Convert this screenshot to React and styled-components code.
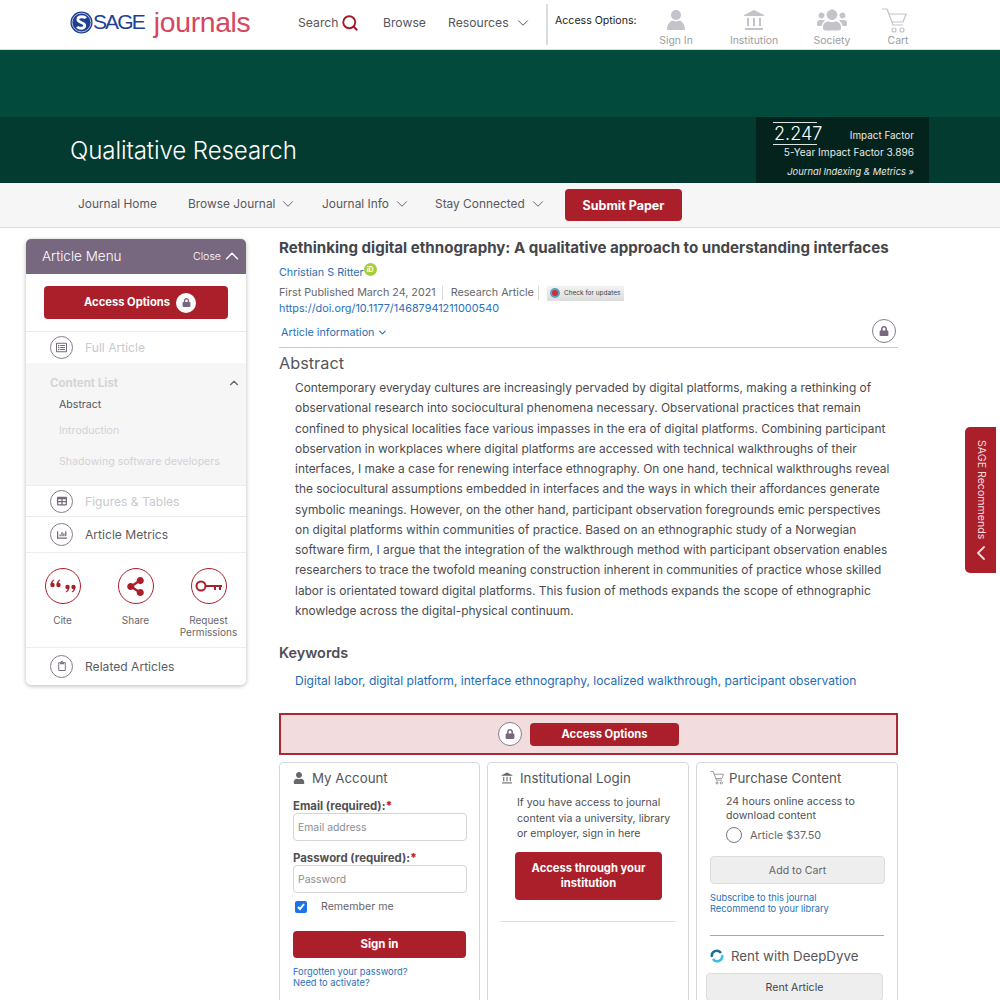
import styled, { createGlobalStyle } from "styled-components";
import { ChevronDown, ChevronUp, ChevronLeft, Search } from "lucide-react";
import { FaLock, FaUser, FaUsers, FaShareAlt, FaRegListAlt, FaTable, FaChartBar, FaRegClipboard } from "react-icons/fa";

const GlobalStyle = createGlobalStyle`
  html, body {
    margin: 0;
    padding: 0;
    background: #fff;
    font-family: Inter, "Liberation Sans", sans-serif;
    color: #4a4a4f;
  }
  * { box-sizing: border-box; }
`;

const Page = styled.div`
  position: relative;
  width: 1000px;
  height: 1000px;
  overflow: hidden;
`;

/* top header */
const Header = styled.header`
  height: 50px;
  display: flex;
  align-items: center;
  padding-left: 70px;
  border-bottom: 1px solid #d9d9d9;
`;

const Logo = styled.div`
  width: 228px;
  display: flex;
  align-items: center;
  height: 50px;
  padding-bottom: 5px;
`;

const LogoSage = styled.span`
  font-family: "Liberation Sans", Arial, sans-serif;
  font-size: 21px;
  letter-spacing: -1.9px;
  color: #1f3f94;
`;

const LogoJournals = styled.span`
  font-family: "Liberation Sans", Arial, sans-serif;
  font-size: 28.3px;
  letter-spacing: -0.3px;
  color: #d8455c;
  margin-left: 10px;
`;

const TopLink = styled.a`
  display: flex;
  align-items: center;
  gap: ${(p) => p.$gap || 3}px;
  width: ${(p) => p.$w}px;
  font-size: 12.2px;
  color: #55555a;
  padding-bottom: 4px;
`;

const Divider = styled.div`
  width: 2px;
  height: 41px;
  margin-left: -2px;
  background: #dcdcdc;
  align-self: flex-start;
  margin-top: 4px;
`;

const AccessLabel = styled.div`
  font-size: 10.6px;
  color: #222;
  width: 91px;
  padding-left: 7px;
  align-self: flex-start;
  margin-top: 14px;
`;

const AccessItem = styled.div`
  width: ${(p) => p.$w}px;
  display: flex;
  flex-direction: column;
  align-items: center;
  justify-content: flex-end;
  height: 47px;
  color: #c4c2cb;
  align-self: flex-start;
  span {
    margin-top: 3px;
    font-size: 10.4px;
    line-height: 13px;
    color: #9b9ba1;
  }
`;

const SocietyIcon = styled(FaUsers)`
  margin-bottom: -4px;
`;

const CartIconBox = styled.div`
  margin: 0 8px -3px 0;
  height: 26px;
`;

const Banner = styled.div`
  height: 133px;
  background: #024a3b;
  display: flex;
  flex-direction: column;
  justify-content: flex-end;
`;

const BannerInner = styled.div`
  height: 66px;
  background: #033b30;
  padding-left: 70px;
  display: flex;
  align-items: center;
  justify-content: space-between;
`;

const JournalTitle = styled.div`
  font-size: 24.1px;
  font-weight: 300;
  color: #fff;
  letter-spacing: -0.1px;
`;

const Metrics = styled.div`
  width: 173px;
  height: 66px;
  margin-right: 71px;
  background: #05231d;
  color: #e6e9e8;
  padding: 5px 15px 0 17px;
  display: flex;
  flex-direction: column;
  font-size: 9.9px;
`;

const FactorRow = styled.div`
  display: flex;
  align-items: center;
  justify-content: space-between;
  height: 23px;
  margin-bottom: 1px;
  span { margin-top: 3px; }
`;

const FactorNum = styled.div`
  font-size: 18px;
  font-weight: 300;
  line-height: 21px;
  color: #fff;
  border-top: 1px solid #dfe5e3;
  border-bottom: 1px solid #dfe5e3;
  padding: 0 1px;
  width: 44px;
`;

const MetricsLine = styled.div`
  text-align: right;
  height: 19px;
  line-height: 14px;
  font-style: ${(p) => (p.$italic ? "italic" : "normal")};
  font-size: ${(p) => (p.$italic ? "9.35px" : "10.1px")};
  margin-top: ${(p) => (p.$italic ? "1px" : "-1px")};
`;

const NavBar = styled.nav`
  height: 45px;
  background: #f6f6f7;
  border-bottom: 1px solid #dcdcdc;
  display: flex;
  align-items: center;
  padding-left: 78px;
  font-size: 11.9px;
  color: #59595e;
`;

const NavItem = styled.div`
  display: flex;
  align-items: center;
  gap: 4px;
  width: ${(p) => p.$w}px;
  padding-bottom: 3px;
`;

const RedButton = styled.button`
  border: none;
  background: #ab1f2a;
  color: #fff;
  font-family: inherit;
  font-weight: 700;
  border-radius: 4px;
  padding: 0 0 0 ${(p) => p.$pl || 0}px;
  display: flex;
  align-items: center;
  justify-content: center;
  text-align: center;
  gap: ${(p) => p.$gap || 0}px;
  font-size: ${(p) => p.$size || 11.2}px;
  width: ${(p) => p.$w}px;
  height: ${(p) => p.$h}px;
  line-height: 15px;
`;

const SignInButton = styled(RedButton)`
  margin-top: 18px;
`;

const InstitutionButton = styled(RedButton)`
  margin: 10px 0 0 14px;
`;

/* body */
const Content = styled.div`
  display: flex;
  padding: 11px 0 0 26px;
  gap: 33px;
`;

const Sidebar = styled.aside`
  width: 220px;
  height: 446px;
  flex-shrink: 0;
  border-radius: 5px;
  background: #fff;
  box-shadow: 0 1px 4px rgba(0, 0, 0, 0.28);
  overflow: hidden;
`;

const SideHead = styled.div`
  height: 35px;
  background: #776880;
  color: #fff;
  display: flex;
  align-items: center;
  justify-content: space-between;
  padding: 0 3px 1px 16px;
  font-size: 13.5px;
  font-weight: 300;
`;

const CloseBtn = styled.div`
  display: flex;
  align-items: center;
  font-size: 10.6px;
`;

const SideAccess = styled.div`
  height: 58px;
  padding: 12px 18px 0 18px;
  border-bottom: 1px solid #ececee;
`;

const WhiteLock = styled.span`
  width: 20px;
  height: 20px;
  border-radius: 50%;
  background: #fff;
  color: #776880;
  display: flex;
  align-items: center;
  justify-content: center;
`;

const MenuRow = styled.div`
  height: ${(p) => p.$h}px;
  display: flex;
  align-items: center;
  padding-left: 24px;
  gap: 12px;
  font-size: 12.1px;
  color: ${(p) => (p.$off ? "#c9c9ce" : "#5c5c61")};
  border-bottom: ${(p) => (p.$line ? "1px solid #ececee" : "none")};
`;

const RoundIcon = styled.span`
  width: ${(p) => p.$s || 23}px;
  height: ${(p) => p.$s || 23}px;
  margin-top: ${(p) => p.$mt || 0}px;
  border-radius: 50%;
  border: 1px solid #867b8e;
  background: #fff;
  color: #776880;
  display: flex;
  align-items: center;
  justify-content: center;
  flex-shrink: 0;
`;

const ContentList = styled.div`
  height: 123px;
  background: #f6f6f7;
  padding: 13px 5px 0 24px;
  border-bottom: 1px solid #ececee;
`;

const ContentHead = styled.div`
  display: flex;
  justify-content: space-between;
  align-items: center;
  font-size: 11.5px;
  font-weight: 700;
  color: #d4d4d8;
`;

const ContentLink = styled.div`
  font-size: 10.6px;
  margin-left: 9px;
  margin-top: ${(p) => p.$top}px;
  color: ${(p) => (p.$off ? "#d2d2d6" : "#55555a")};
`;

const Tools = styled.div`
  height: 95px;
  padding-top: 15px;
  display: grid;
  grid-template-columns: 73px 73px 73px;
  border-bottom: 1px solid #ececee;
`;

const Tool = styled.div`
  display: flex;
  flex-direction: column;
  align-items: center;
  text-align: center;
  font-size: 10px;
  line-height: 12px;
  color: #66666b;
`;

const ToolIcon = styled.span`
  width: 36px;
  height: 36px;
  border-radius: 50%;
  border: 1.5px solid #ab1f2a;
  color: #ab1f2a;
  display: flex;
  align-items: center;
  justify-content: center;
  margin-bottom: 10px;
`;

const Main = styled.main`
  width: 619px;
`;

const Title = styled.h1`
  margin: 0;
  font-size: 15.1px;
  line-height: 18px;
  font-weight: 700;
  color: #45454a;
  white-space: nowrap;
`;

const Author = styled.div`
  margin-top: 8px;
  display: flex;
  align-items: flex-start;
  font-size: 10.75px;
  line-height: 16px;
  color: #2a70b8;
`;

const OrcidBadge = styled.span`
  width: 13px;
  height: 13px;
  border-radius: 50%;
  background: #a6ce39;
  color: #fff;
  font-size: 7px;
  font-weight: 700;
  line-height: 13px;
  text-align: center;
  margin-top: -2px;
`;

const MetaRow = styled.div`
  margin-top: 4px;
  display: flex;
  align-items: center;
  font-size: 10.75px;
  line-height: 16px;
  color: #66666b;
`;

const MetaSep = styled.span`
  width: 1px;
  height: 14px;
  background: #d9d9dc;
  margin: 0 ${(p) => p.$r || 8}px 0 ${(p) => p.$l || 6}px;
`;

const CheckBadge = styled.span`
  height: 15px;
  width: 77px;
  background: linear-gradient(#f2f2f2, #dcdcdc);
  display: flex;
  align-items: center;
  gap: 4px;
  padding-left: 3px;
  font-size: 6.5px;
  color: #444;
  white-space: nowrap;
`;

const BadgeDot = styled.span`
  width: 10px;
  height: 10px;
  border-radius: 50%;
  background: #c9332f;
  border: 2px solid #5ea1c7;
`;

const Doi = styled.a`
  display: block;
  font-size: 10.85px;
  line-height: 15px;
  color: #2a70b8;
`;

const InfoRow = styled.div`
  height: 32px;
  padding: 0 2px;
  display: flex;
  align-items: center;
  justify-content: space-between;
  border-bottom: 1px solid #c9c9cc;
  font-size: 10.75px;
  color: #2a70b8;
`;

const InfoLink = styled.span`
  display: flex;
  align-items: center;
  gap: 3px;
  margin-top: 2px;
`;

const H2 = styled.h2`
  margin: 5px 0 0;
  font-size: 16.3px;
  line-height: 20px;
  font-weight: 400;
  color: #55555a;
`;

const Abstract = styled.p`
  margin: 5px 0 0;
  padding-left: 16px;
  width: 612px;
  font-size: 11.9px;
  line-height: 20.27px;
  color: #4b4b50;
`;

const KeywordsHead = styled.h3`
  margin: 23px 0 0;
  font-size: 14.4px;
  line-height: 18px;
  font-weight: 600;
  color: #4f4f54;
`;

const Keywords = styled.div`
  margin-top: 10px;
  padding-left: 16px;
  font-size: 12.05px;
  line-height: 18px;
  color: #1e6bb8;
  span { color: #55555a; }
`;

const AccessBar = styled.div`
  margin-top: 23px;
  height: 42px;
  background: #f3dcde;
  border: 2px solid #a92a33;
  display: flex;
  align-items: center;
  justify-content: center;
  gap: 8px;
`;

const Cards = styled.div`
  margin-top: 7px;
  display: grid;
  grid-template-columns: 201px 202px 202px;
  gap: 7px;
`;

const Card = styled.section`
  height: 260px;
  border: 1px solid #d8d8dc;
  border-radius: 4px;
  padding: 6px 13px 0;
`;

const CardTitle = styled.div`
  display: flex;
  align-items: center;
  gap: ${(p) => p.$gap || 7}px;
  height: 18px;
  margin-top: ${(p) => p.$top || 0}px;
  font-size: 13.3px;
  color: #55555a;
  svg { color: #66666b; flex-shrink: 0; }
`;

const FieldLabel = styled.div`
  margin-top: ${(p) => p.$top}px;
  font-size: 11.4px;
  line-height: 14px;
  font-weight: 700;
  color: #505055;
  b { color: #c4232d; }
`;

const TextBox = styled.div`
  height: 28px;
  width: 174px;
  border: 1px solid #d5d5d8;
  border-radius: 4px;
  display: flex;
  align-items: center;
  padding-left: 4px;
  font-size: 10.4px;
  color: #8c8c91;
`;

const Remember = styled.div`
  display: flex;
  align-items: center;
  gap: 14px;
  margin-top: 7px;
  padding-left: 2px;
  font-size: 10.6px;
  color: #66666b;
`;

const Check = styled.span`
  width: 12px;
  height: 12px;
  border-radius: 2px;
  background: #1a73e8;
  display: flex;
  align-items: center;
  justify-content: center;
`;

const SmallLinks = styled.div`
  font-size: 9.3px;
  line-height: 11px;
  color: #2a70b8;
  margin-top: ${(p) => p.$top}px;
`;

const CardText = styled.div`
  margin: ${(p) => p.$top || 6}px 0 0 16px;
  font-size: 10.6px;
  line-height: ${(p) => p.$lh || 15.5}px;
  color: #505055;
`;

const Rule = styled.div`
  height: ${(p) => p.$h || 1}px;
  background: ${(p) => p.$c || "#dcdcdf"};
  margin-top: ${(p) => p.$top}px;
`;

const RadioRow = styled.div`
  display: flex;
  align-items: center;
  gap: 8px;
  margin: 4px 0 0 16px;
  font-size: 10.9px;
  color: #66666b;
`;

const Radio = styled.span`
  width: 16px;
  height: 16px;
  border-radius: 50%;
  border: 1px solid #77777c;
`;

const GreyButton = styled.div`
  width: ${(p) => p.$w}px;
  height: 28px;
  margin: ${(p) => p.$top}px 0 0 ${(p) => p.$left || 0}px;
  background: #eeeeee;
  border: 1px solid #dcdcdc;
  border-radius: 4px;
  display: flex;
  align-items: center;
  justify-content: center;
  font-size: 10.6px;
  color: ${(p) => p.$c || "#66666b"};
`;

const SideTab = styled.div`
  position: absolute;
  right: 4px;
  top: 427px;
  width: 31px;
  height: 146px;
  background: #ab1f2a;
  border-radius: 5px 0 0 5px;
  color: #f2d9db;
  display: flex;
  flex-direction: column;
  align-items: center;
  padding-top: 13px;
  font-size: 10.6px;
  span {
    writing-mode: vertical-rl;
    line-height: 14px;
  }
  svg { margin-top: 2px; }
`;

const UserGlyph = ({ size = 22, color = "currentColor" }) => (
  <svg width={size} height={size} viewBox="0 0 22 22" fill={color}>
    <circle cx="11" cy="6" r="5" />
    <path d="M2 21c0-6 3-9 6-9.5 2 1.4 4 1.4 6 0 3 .5 6 3.5 6 9.5z" />
  </svg>
);

const BankGlyph = ({ size = 22 }) => (
  <svg width={size} height={size} viewBox="0 0 22 22" fill="currentColor">
    <path d="M11 1 21 6v1H1V6z" />
    <rect x="4" y="9" width="2" height="8" />
    <rect x="10" y="9" width="2" height="8" />
    <rect x="16" y="9" width="2" height="8" />
    <rect x="2" y="19" width="18" height="2" />
  </svg>
);

const CartGlyph = ({ size = 26 }) => (
  <svg width={size} height={size} viewBox="0 0 26 26" fill="none" stroke="currentColor" strokeWidth="1.2">
    <path d="M1 1h5l6 16h10" />
    <path d="M8 6h17l-3 8H11" />
    <circle cx="13" cy="22" r="2" />
    <circle cx="21" cy="22" r="2" />
  </svg>
);

const KeyGlyph = () => (
  <svg width="28" height="14" viewBox="0 0 28 14" fill="none" stroke="currentColor" strokeWidth="2">
    <circle cx="6" cy="7" r="4.5" />
    <path d="M11 7h16M20 7v4M25 7v4" />
  </svg>
);

const QuotesGlyph = () => (
  <svg width="26" height="14" viewBox="0 0 26 14" fill="currentColor">
    <circle cx="2.500" cy="6" r="2.200" />
    <path d="M.6 5.400C.8 2.800 2 1.200 4 .6l.3.8C3 2 2.400 3.200 2.400 5z" />
    <circle cx="8.500" cy="6" r="2.200" />
    <path d="M6.600 5.400C6.800 2.800 8 1.200 10 .6l.3.8C9 2 8.400 3.200 8.400 5z" />
    <circle cx="17.500" cy="8" r="2.200" />
    <path d="M19.400 8.600c-.2 2.600-1.400 4.200-3.400 4.800l-.3-.8c1.300-.6 1.900-1.800 1.900-3.600z" />
    <circle cx="23.500" cy="8" r="2.200" />
    <path d="M25.400 8.600c-.2 2.600-1.400 4.200-3.400 4.800l-.3-.8c1.300-.6 1.900-1.800 1.900-3.600z" />
  </svg>
);

const SageMark = () => (
  <svg width="23" height="23" viewBox="0 0 25 25">
    <circle cx="12.5" cy="12.5" r="12" fill="#1f3f94" />
    <circle cx="12.5" cy="12.5" r="10.2" fill="none" stroke="#fff" strokeWidth="0.7" />
    <path d="M17 8c-1-2-8-3-8.500 1s8 3 7.500 7-7 3-8 1" fill="none" stroke="#fff" strokeWidth="3" />
  </svg>
);

const DeepDyveMark = () => (
  <svg width="14" height="14" viewBox="0 0 14 14" fill="none" strokeWidth="2.5">
    <path d="M2 8a5 5 0 0 1 9-4" stroke="#1b6f9c" />
    <path d="M12 6a5 5 0 0 1-9 4" stroke="#3cc0dd" />
  </svg>
);

const NavChevron = () => <ChevronDown size={18} strokeWidth={1.2} />;

const abstractText =
  "Contemporary everyday cultures are increasingly pervaded by digital platforms, making a rethinking of observational research into sociocultural phenomena necessary. Observational practices that remain confined to physical localities face various impasses in the era of digital platforms. Combining participant observation in workplaces where digital platforms are accessed with technical walkthroughs of their interfaces, I make a case for renewing interface ethnography. On one hand, technical walkthroughs reveal the sociocultural assumptions embedded in interfaces and the ways in which their affordances generate symbolic meanings. However, on the other hand, participant observation foregrounds emic perspectives on digital platforms within communities of practice. Based on an ethnographic study of a Norwegian software firm, I argue that the integration of the walkthrough method with participant observation enables researchers to trace the twofold meaning construction inherent in communities of practice whose skilled labor is orientated toward digital platforms. This fusion of methods expands the scope of ethnographic knowledge across the digital-physical continuum.";

const App = () => {
  return (
    <Page>
      <GlobalStyle />
      <Header>
        <Logo>
          <SageMark />
          <LogoSage>SAGE</LogoSage>
          <LogoJournals>journals</LogoJournals>
        </Logo>
        <TopLink $w={85}>
          Search <Search size={18} color="#a3182a" strokeWidth={2.5} />
        </TopLink>
        <TopLink $w={65}>Browse</TopLink>
        <TopLink $w={100} $gap={5}>
          Resources <ChevronDown size={18} strokeWidth={1.3} />
        </TopLink>
        <Divider />
        <AccessLabel>Access Options:</AccessLabel>
        <AccessItem $w={74}>
          <UserGlyph />
          <span>Sign In</span>
        </AccessItem>
        <AccessItem $w={82}>
          <BankGlyph />
          <span>Institution</span>
        </AccessItem>
        <AccessItem $w={74}>
          <SocietyIcon size={30} />
          <span>Society</span>
        </AccessItem>
        <AccessItem $w={58}>
          <CartIconBox>
            <CartGlyph />
          </CartIconBox>
          <span>Cart</span>
        </AccessItem>
      </Header>

      <Banner>
        <BannerInner>
          <JournalTitle>Qualitative Research</JournalTitle>
          <Metrics>
            <FactorRow>
              <FactorNum>2.247</FactorNum>
              <span>Impact Factor</span>
            </FactorRow>
            <MetricsLine>5-Year Impact Factor 3.896</MetricsLine>
            <MetricsLine $italic>Journal Indexing &amp; Metrics »</MetricsLine>
          </Metrics>
        </BannerInner>
      </Banner>

      <NavBar>
        <NavItem $w={110}>Journal Home</NavItem>
        <NavItem $w={134}>
          Browse Journal <NavChevron />
        </NavItem>
        <NavItem $w={113}>
          Journal Info <NavChevron />
        </NavItem>
        <NavItem $w={130}>
          Stay Connected <NavChevron />
        </NavItem>
        <RedButton $w={117} $h={32} $size={12.5}>
          Submit Paper
        </RedButton>
      </NavBar>

      <Content>
        <Sidebar>
          <SideHead>
            Article Menu
            <CloseBtn>
              Close <ChevronUp size={22} strokeWidth={1.5} />
            </CloseBtn>
          </SideHead>
          <SideAccess>
            <RedButton $w={184} $h={33} $gap={6} $pl={8}>
              Access Options
              <WhiteLock>
                <FaLock size={9} />
              </WhiteLock>
            </RedButton>
          </SideAccess>
          <MenuRow $h={31} $off>
            <RoundIcon>
              <FaRegListAlt size={11} />
            </RoundIcon>
            Full Article
          </MenuRow>
          <ContentList>
            <ContentHead>
              Content List
              <ChevronUp size={14} color="#66666b" />
            </ContentHead>
            <ContentLink $top={8}>Abstract</ContentLink>
            <ContentLink $top={13} $off>
              Introduction
            </ContentLink>
            <ContentLink $top={18} $off>
              Shadowing software developers
            </ContentLink>
          </ContentList>
          <MenuRow $h={31} $off $line>
            <RoundIcon>
              <FaTable size={10} />
            </RoundIcon>
            Figures &amp; Tables
          </MenuRow>
          <MenuRow $h={36} $line>
            <RoundIcon>
              <FaChartBar size={10} />
            </RoundIcon>
            Article Metrics
          </MenuRow>
          <Tools>
            <Tool>
              <ToolIcon>
                <QuotesGlyph />
              </ToolIcon>
              Cite
            </Tool>
            <Tool>
              <ToolIcon>
                <FaShareAlt size={19} />
              </ToolIcon>
              Share
            </Tool>
            <Tool>
              <ToolIcon>
                <KeyGlyph />
              </ToolIcon>
              Request
              <br />
              Permissions
            </Tool>
          </Tools>
          <MenuRow $h={36}>
            <RoundIcon>
              <FaRegClipboard size={10} />
            </RoundIcon>
            Related Articles
          </MenuRow>
        </Sidebar>

        <Main>
          <Title>Rethinking digital ethnography: A qualitative approach to understanding interfaces</Title>
          <Author>
            Christian S Ritter
            <OrcidBadge>iD</OrcidBadge>
          </Author>
          <MetaRow>
            First Published March 24, 2021
            <MetaSep />
            Research Article
            <MetaSep $l={4} />
            <CheckBadge>
              <BadgeDot />
              Check for updates
            </CheckBadge>
          </MetaRow>
          <Doi>https://doi.org/10.1177/14687941211000540</Doi>
          <InfoRow>
            <InfoLink>
              Article information <ChevronDown size={11} strokeWidth={2.5} />
            </InfoLink>
            <RoundIcon $s={24} $mt={-2}>
              <FaLock size={10} />
            </RoundIcon>
          </InfoRow>
          <H2>Abstract</H2>
          <Abstract>{abstractText}</Abstract>
          <KeywordsHead>Keywords</KeywordsHead>
          <Keywords>
            Digital labor<span>, </span>digital platform<span>, </span>interface ethnography<span>, </span>localized
            walkthrough<span>, </span>participant observation
          </Keywords>
          <AccessBar>
            <RoundIcon $s={24}>
              <FaLock size={10} />
            </RoundIcon>
            <RedButton $w={149} $h={23}>
              Access Options
            </RedButton>
          </AccessBar>
          <Cards>
            <Card>
              <CardTitle>
                <FaUser size={12} />
                My Account
              </CardTitle>
              <FieldLabel $top={12}>
                Email (required):<b>*</b>
              </FieldLabel>
              <TextBox>Email address</TextBox>
              <FieldLabel $top={10}>
                Password (required):<b>*</b>
              </FieldLabel>
              <TextBox>Password</TextBox>
              <Remember>
                <Check>
                  <svg width="10" height="10" viewBox="0 0 10 10" fill="none" stroke="#fff" strokeWidth="2">
                    <path d="M2 5l2 2 4-5" />
                  </svg>
                </Check>
                Remember me
              </Remember>
              <SignInButton $w={173} $h={27} $size={11.5}>
                Sign in
              </SignInButton>
              <SmallLinks $top={8}>
                Forgotten your password?
                <br />
                Need to activate?
              </SmallLinks>
            </Card>
            <Card>
              <CardTitle>
                <BankGlyph size={12} />
                Institutional Login
              </CardTitle>
              <CardText $top={8}>
                If you have access to journal content via a university, library or employer, sign in here
              </CardText>
              <InstitutionButton $w={147} $h={48}>
                Access through your
                <br />
                institution
              </InstitutionButton>
              <Rule $top={21} />
            </Card>
            <Card>
              <CardTitle $gap={5}>
                <CartGlyph size={14} />
                Purchase Content
              </CardTitle>
              <CardText $top={8} $lh={14}>
                24 hours online access to download content
              </CardText>
              <RadioRow>
                <Radio />
                Article $37.50
              </RadioRow>
              <GreyButton $w={175} $top={13}>
                Add to Cart
              </GreyButton>
              <SmallLinks $top={8}>
                Subscribe to this journal
                <br />
                Recommend to your library
              </SmallLinks>
              <Rule $top={21} $c="#a9a9ad" />
              <CardTitle $gap={7} $top={11}>
                <DeepDyveMark />
                Rent with DeepDyve
              </CardTitle>
              <GreyButton $w={177} $top={8} $left={-4} $c="#44444a">
                Rent Article
              </GreyButton>
            </Card>
          </Cards>
        </Main>
      </Content>

      <SideTab>
        <span>SAGE Recommends</span>
        <ChevronLeft size={24} strokeWidth={1.8} />
      </SideTab>
    </Page>
  );
};

export default App;
